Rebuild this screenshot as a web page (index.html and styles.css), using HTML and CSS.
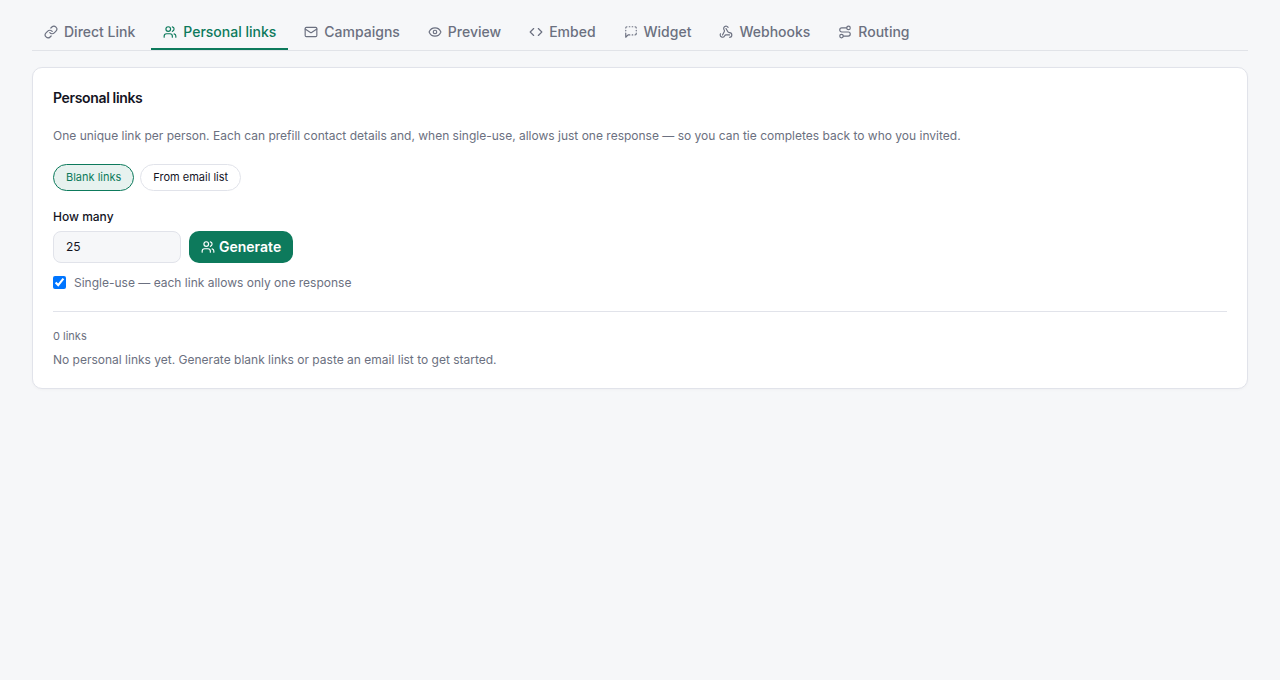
FILE: index.html
```
<!DOCTYPE html>
<html lang="en">
<head>
    <meta charset="UTF-8">
    <meta name="viewport" content="width=device-width, initial-scale=1.0">
    <title>Personal links</title>
    <link rel="stylesheet" href="styles.css">
</head>
<body>

    <nav class="tabs">
        <a class="tab">
            <svg class="icon" viewBox="0 0 24 24"><path d="M10 13a5 5 0 0 0 7.54.54l3-3a5 5 0 0 0-7.07-7.07l-1.72 1.71"/><path d="M14 11a5 5 0 0 0-7.54-.54l-3 3a5 5 0 0 0 7.07 7.07l1.71-1.71"/></svg>
            Direct Link
        </a>
        <a class="tab active">
            <svg class="icon" viewBox="0 0 24 24"><path d="M16 21v-2a4 4 0 0 0-4-4H6a4 4 0 0 0-4 4v2"/><circle cx="9" cy="7" r="4"/><path d="M22 21v-2a4 4 0 0 0-3-3.87"/><path d="M16 3.13a4 4 0 0 1 0 7.75"/></svg>
            Personal links
        </a>
        <a class="tab">
            <svg class="icon" viewBox="0 0 24 24"><rect x="2" y="4" width="20" height="16" rx="2"/><path d="m22 7-8.97 5.7a1.94 1.94 0 0 1-2.06 0L2 7"/></svg>
            Campaigns
        </a>
        <a class="tab">
            <svg class="icon" viewBox="0 0 24 24"><path d="M2.06 12.35a1 1 0 0 1 0-.7 10.75 10.75 0 0 1 19.88 0 1 1 0 0 1 0 .7 10.75 10.75 0 0 1-19.88 0"/><circle cx="12" cy="12" r="3"/></svg>
            Preview
        </a>
        <a class="tab">
            <svg class="icon" viewBox="0 0 24 24"><path d="m16 18 6-6-6-6"/><path d="m8 6-6 6 6 6"/></svg>
            Embed
        </a>
        <a class="tab">
            <svg class="icon" viewBox="0 0 24 24"><path d="M10 17H7l-4 4v-7"/><path d="M14 17h1"/><path d="M14 3h1"/><path d="M19 3a2 2 0 0 1 2 2"/><path d="M21 14v1a2 2 0 0 1-2 2"/><path d="M21 9v1"/><path d="M3 9v1"/><path d="M5 3a2 2 0 0 0-2 2"/><path d="M9 3h1"/></svg>
            Widget
        </a>
        <a class="tab">
            <svg class="icon" viewBox="0 0 24 24"><path d="M18 16.98h-5.99c-1.1 0-1.95.94-2.48 1.9A4 4 0 0 1 2 17c.01-.7.2-1.4.57-2"/><path d="m6 17 3.13-5.78c.53-.97.1-2.18-.5-3.1a4 4 0 1 1 6.89-4.06"/><path d="m12 6 3.13 5.73C15.66 12.7 16.9 13 18 13a4 4 0 0 1 0 8"/></svg>
            Webhooks
        </a>
        <a class="tab">
            <svg class="icon" viewBox="0 0 24 24"><circle cx="6" cy="19" r="3"/><path d="M9 19h8.5a3.5 3.5 0 0 0 0-7h-11a3.5 3.5 0 0 1 0-7H15"/><circle cx="18" cy="5" r="3"/></svg>
            Routing
        </a>
    </nav>

    <section class="card">
        <h3>Personal links</h3>
        <p class="description">One unique link per person. Each can prefill contact details and, when single-use, allows just one response — so you can tie completes back to who you invited.</p>

        <div class="modes">
            <button type="button" class="pill selected">Blank links</button>
            <button type="button" class="pill">From email list</button>
        </div>

        <label class="field-label" for="count">How many</label>
        <div class="generate-row">
            <input type="text" id="count" class="count" value="25">
            <button type="button" class="generate">
                <svg class="icon" viewBox="0 0 24 24"><path d="M16 21v-2a4 4 0 0 0-4-4H6a4 4 0 0 0-4 4v2"/><circle cx="9" cy="7" r="4"/><path d="M22 21v-2a4 4 0 0 0-3-3.87"/><path d="M16 3.13a4 4 0 0 1 0 7.75"/></svg>
                Generate
            </button>
        </div>
        <label class="single-use">
            <input type="checkbox" checked>
            Single-use — each link allows only one response
        </label>

        <div class="results">
            <div class="total">0 links</div>
            <p class="empty">No personal links yet. Generate blank links or paste an email list to get started.</p>
        </div>
    </section>

</body>
</html>
```
FILE: styles.css
```
* {
    box-sizing: border-box;
}
body {
    margin: 0;
    padding: 14px 32px;
    font-family: Inter, sans-serif;
    font-size: 14px;
    color: #14141f;
    background-color: #f6f7f9;
}
h3, p {
    margin: 0;
}
button, input {
    font-family: inherit;
}
.icon {
    width: 14px;
    height: 14px;
    flex-shrink: 0;
    fill: none;
    stroke: currentColor;
    stroke-width: 2;
    stroke-linecap: round;
    stroke-linejoin: round;
}
.tabs {
    display: flex;
    gap: 4px;
    height: 37px;
    border-bottom: 1px solid #e1e3e8;
}
.tab {
    display: flex;
    align-items: center;
    gap: 6px;
    height: 36px;
    padding: 2px 12px 0;
    border-bottom: 2px solid transparent;
    font-weight: 500;
    line-height: 20px;
    color: #6b7080;
    cursor: pointer;
}
.tab.active {
    color: #0d7a5c;
    border-bottom-color: #0d7a5c;
}
.card {
    margin-top: 16px;
    padding: 20px;
    height: 322px;
    border: 1px solid #e1e3ea;
    border-radius: 10px;
    background-color: #fff;
    box-shadow: 0 1px 3px rgba(20, 20, 40, 0.03);
}
.card h3 {
    font-size: 14px;
    font-weight: 600;
    line-height: 20px;
    letter-spacing: -0.025em;
}
.description {
    margin-top: 18px;
    font-size: 12px;
    line-height: 20px;
    color: #6b7080;
}
.modes {
    display: flex;
    gap: 6px;
    margin-top: 18px;
}
.pill {
    height: 27px;
    padding: 0 12px 2px;
    border: 1px solid #e1e3ea;
    border-radius: 14px;
    background-color: #fff;
    font-size: 11px;
    color: #14141f;
}
.pill.selected {
    border-color: #0d7a5c;
    background-color: #e7f2ef;
    color: #0d7a5c;
}
.field-label {
    display: block;
    margin-top: 16px;
    font-size: 12px;
    font-weight: 500;
    line-height: 20px;
}
.generate-row {
    display: flex;
    gap: 8px;
    margin-top: 4px;
}
.count {
    width: 128px;
    height: 32px;
    padding: 0 12px 1px;
    border: 1px solid #e1e3ea;
    border-radius: 8px;
    background-color: #f6f7f9;
    font-size: 12px;
    color: #14141f;
}
.generate {
    display: flex;
    align-items: center;
    gap: 4px;
    height: 32px;
    padding: 0 12px;
    border: none;
    border-radius: 10px;
    background-color: #0d7a5c;
    font-size: 14px;
    font-weight: 600;
    line-height: 20px;
    color: #fff;
}
.single-use {
    display: flex;
    align-items: center;
    gap: 8px;
    margin-top: 10px;
    font-size: 12px;
    line-height: 20px;
    color: #6b7080;
}
.single-use input {
    margin: 0 0 1px;
}
.results {
    margin-top: 18px;
    padding-top: 16px;
    border-top: 1px solid #e1e3ea;
    color: #6b7080;
}
.total {
    font-size: 11px;
    line-height: 16px;
}
.empty {
    margin-top: 6px;
    font-size: 12px;
    line-height: 20px;
}
```
